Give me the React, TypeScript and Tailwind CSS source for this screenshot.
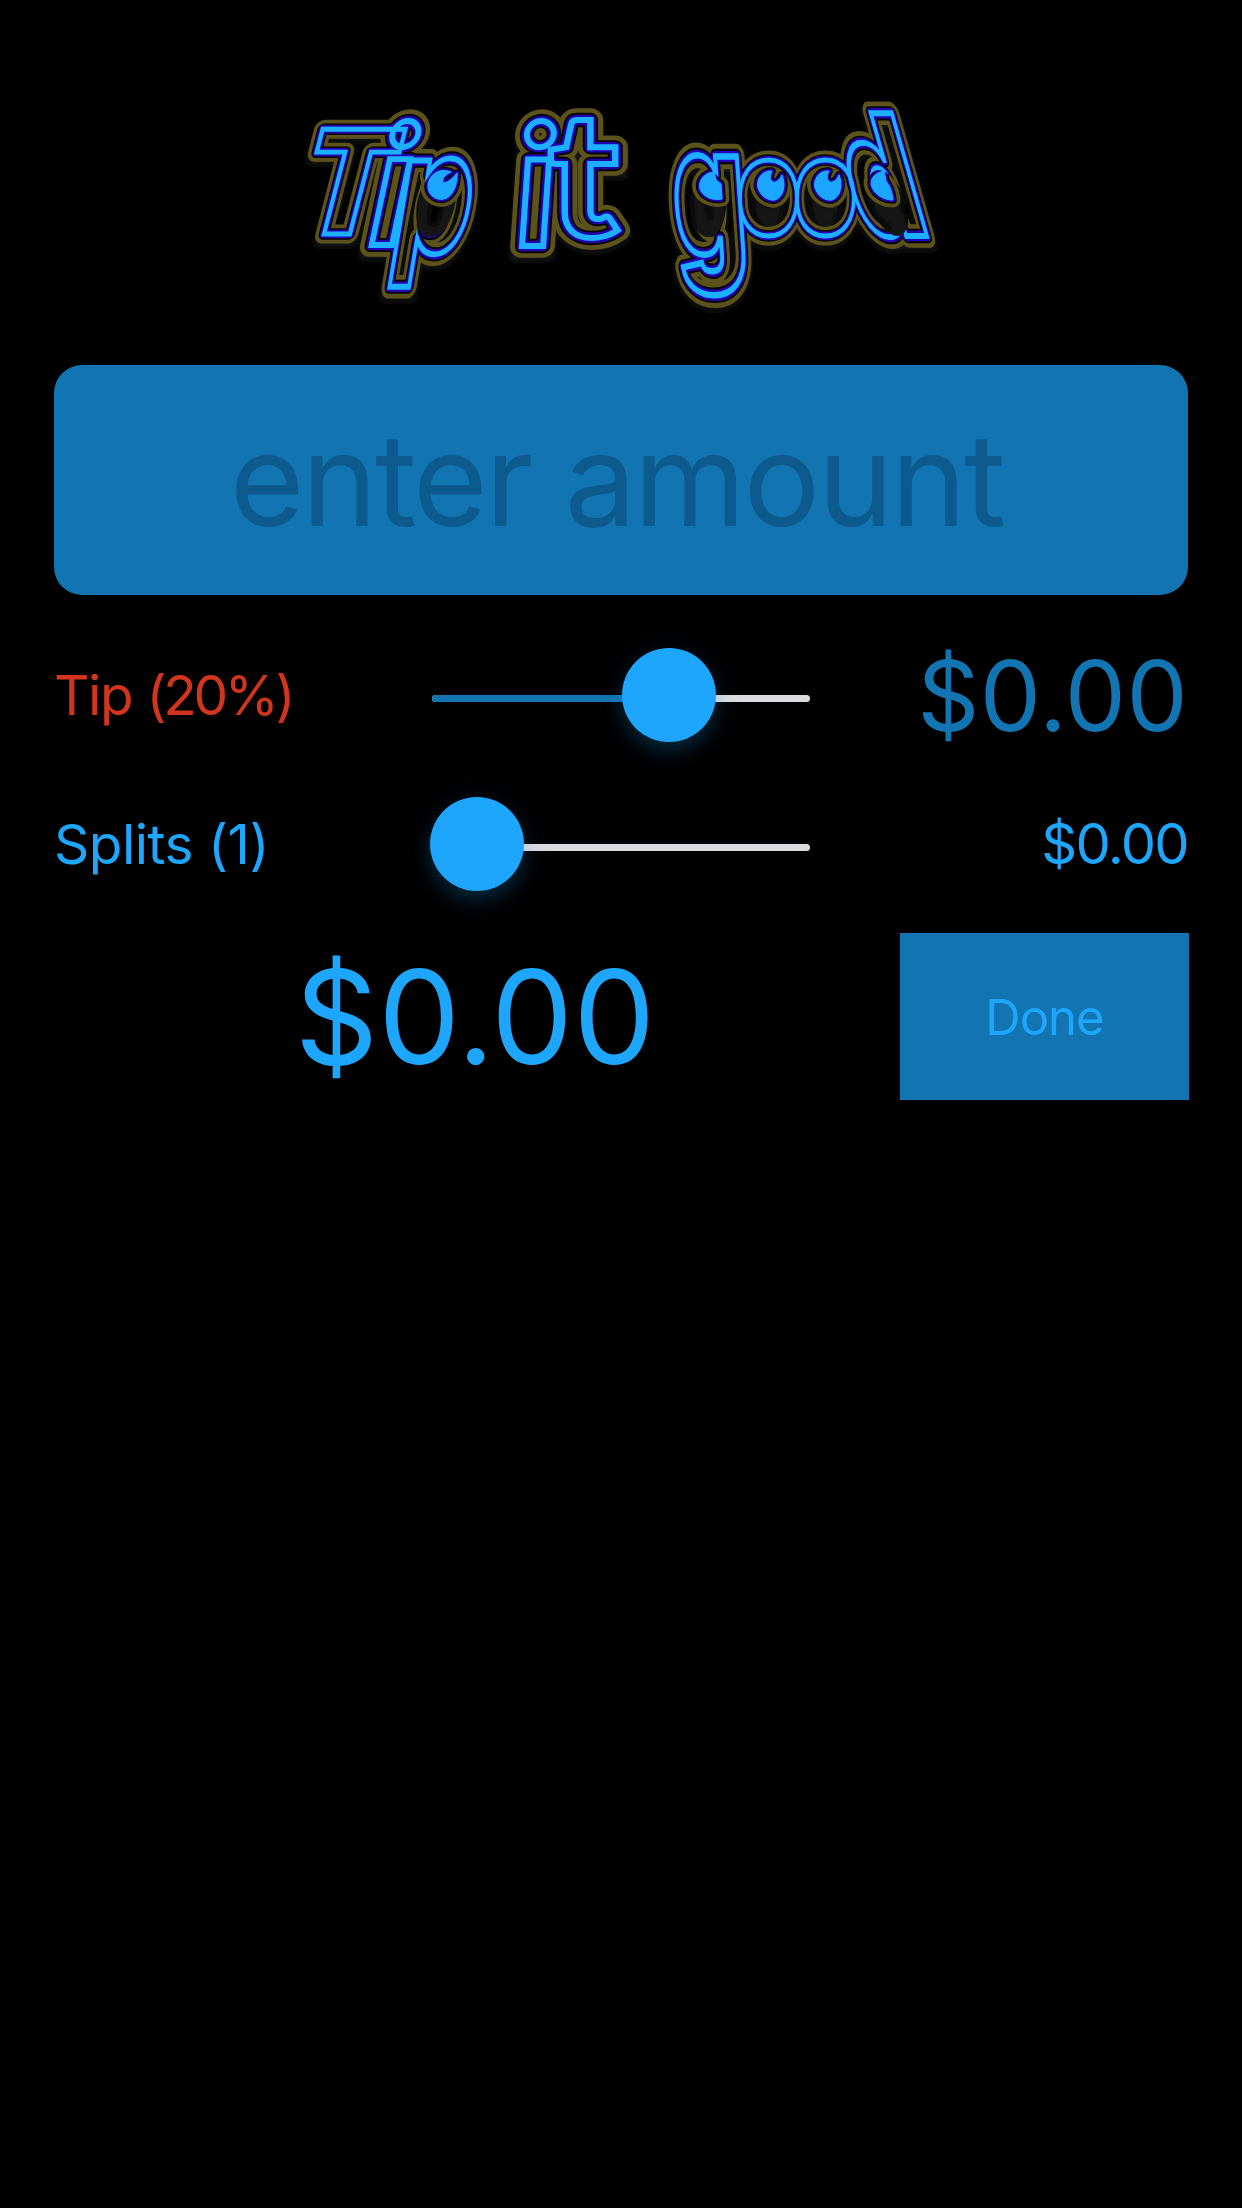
import React from "react";

type Letter = {
  ch: string;
  x: number;
  y: number;
  size: number;
  weight: number;
  skew: number;
  sx: number;
  sy: number;
  font: string;
};

const INTER = "Inter, sans-serif";
const LATO = "Lato, sans-serif";
const DEJAVU = "'DejaVu Sans', sans-serif";

const letters: Letter[] = [
  { ch: "T", x: 292, y: 234, size: 144, weight: 900, skew: -14.5, sx: 0.91, sy: 1, font: INTER },
  { ch: "i", x: 361, y: 245, size: 136, weight: 700, skew: -12, sx: 1.2, sy: 1.23, font: LATO },
  { ch: "p", x: 386, y: 252, size: 136, weight: 700, skew: -9.5, sx: 0.82, sy: 1.23, font: DEJAVU },
  { ch: "i", x: 511, y: 246, size: 136, weight: 700, skew: -4, sx: 1.25, sy: 1.24, font: LATO },
  { ch: "t", x: 548, y: 237, size: 140, weight: 900, skew: 0, sx: 1.33, sy: 1.24, font: LATO },
  { ch: "g", x: 677, y: 256, size: 136, weight: 900, skew: 4, sx: 0.82, sy: 1.34, font: INTER },
  { ch: "o", x: 737, y: 235, size: 136, weight: 900, skew: 0, sx: 0.74, sy: 1, font: INTER },
  { ch: "o", x: 794, y: 235, size: 136, weight: 900, skew: 0, sx: 0.74, sy: 1, font: INTER },
  { ch: "d", x: 863, y: 236, size: 136, weight: 900, skew: 16, sx: 0.79, sy: 1.24, font: INTER },
];

const pupils = [
  "M451 172 C438 167 428 176 428 186 C428 197 439 202 447 198 C454 194 458 182 457 173 C454 177 449 182 444 183 C441 180 444 175 451 172 Z",
  "M714 172 C703 173 698 182 700 189 C703 197 713 201 722 199 L721 184 L716 180 Z",
  "M772 171 C761 170 756 181 758 188 C761 197 769 201 775 200 C784 197 786 184 782 175 C780 179 777 183 773 182 C769 180 770 175 772 171 Z",
  "M829 171 C818 170 813 181 815 188 C818 197 826 201 832 200 C841 197 843 184 839 175 C837 179 834 183 830 182 C826 180 827 175 829 171 Z",
  "M884 171 C874 173 869 180 872 187 C875 195 884 200 893 200 C892 191 890 186 886 181 Z",
];

const layers = [
  { width: 19, color: "#5b521f", join: "round" as const, pupil: 15 },
  { width: 11.5, color: "#050500", join: "round" as const, pupil: 7.5 },
  { width: 8.5, color: "#2400b4", join: "round" as const, pupil: 4.5 },
  { width: 4.8, color: "#1ab0ff", join: "miter" as const, pupil: 1 },
];

function Logo() {
  return (
    <svg viewBox="290 80 670 240" className="h-[240px] w-[670px]" role="img" aria-label="Tip it good">
      <defs>
        <g id="word">
          {letters.map((l, i) => (
            <text
              key={i}
              fontFamily={l.font}
              fontWeight={l.weight}
              fontSize={l.size}
              transform={`translate(${l.x} ${l.y}) skewX(${l.skew}) scale(${l.sx} ${l.sy})`}
            >
              {l.ch}
            </text>
          ))}
        </g>
        <g id="pupils">
          {pupils.map((d) => (
            <path key={d} d={d} />
          ))}
        </g>
        <mask id="eyes" maskUnits="userSpaceOnUse" x="290" y="80" width="670" height="240">
          <rect x="290" y="80" width="670" height="240" fill="#fff" />
          <ellipse cx="767" cy="198" rx="17.5" ry="29" />
          <ellipse cx="825" cy="198" rx="17.5" ry="29" />
          <ellipse cx="708" cy="204" rx="18" ry="33" />
          <ellipse rx="18" ry="33" transform="translate(888 203) skewX(16)" />
          <ellipse rx="19" ry="33" transform="translate(436 204) skewX(-9.5)" />
        </mask>
        <filter id="soft" x="-5%" y="-5%" width="110%" height="115%">
          <feGaussianBlur stdDeviation="0.6" />
        </filter>
        <filter id="glow" x="-5%" y="-5%" width="110%" height="120%">
          <feGaussianBlur stdDeviation="3" />
        </filter>
      </defs>
      <use href="#word" y="4" fill="none" stroke="#121212" strokeWidth="18" filter="url(#glow)" />
      <g filter="url(#soft)">
        {layers.map((l) => (
          <g key={l.width} fill="none" stroke={l.color} strokeLinejoin={l.join}>
            <g mask="url(#eyes)" strokeWidth={l.width}>
              <use href="#word" />
            </g>
            <use href="#pupils" strokeWidth={l.pupil} fill="#1aa6ff" />
          </g>
        ))}
      </g>
    </svg>
  );
}

function Slider({ value, filled }: { value: string; filled: string }) {
  return (
    <div className="relative flex h-[94px] w-[380px] items-center">
      <div className="mt-[7px] ml-[2px] h-[7px] w-[378px] overflow-hidden rounded-full bg-[#dcdcde]">
        <div className={`h-full bg-[#1274b0] ${filled}`} />
      </div>
      <div
        className={`absolute top-0 size-[94px] rounded-full bg-[#1da6fc] shadow-[0_9px_20px_rgba(29,166,252,0.22),0_3px_40px_rgba(29,166,252,0.06)] ${value}`}
      />
    </div>
  );
}

export default function App() {
  return (
    <main className="flex h-[2208px] w-[1242px] flex-col bg-black font-['Inter',sans-serif] text-[#1da6fc]">
      <header className="flex h-[365px] items-start pt-20 pl-[290px]">
        <Logo />
      </header>
      <div className="mx-[54px] flex h-[230px] items-center justify-center rounded-[28px] bg-[#1274b0] pr-[9px] text-[128px] leading-none tracking-[-2.5px] whitespace-nowrap text-[#0d5a8e]">
        enter amount
      </div>
      <section className="flex h-[200px] items-center pr-[54px] pl-[54px]">
        <span className="w-[376px] text-[55px] leading-none tracking-[-1.4px] text-[#d2351d]">
          Tip <span className="tracking-[-3.3px]">(20%)</span>
        </span>
        <Slider value="left-[192px]" filled="w-[240px]" />
        <span className="ml-auto text-[97px] leading-none tracking-[0.4px] text-[#1274b0]">$0.00</span>
      </section>
      <section className="flex h-[98px] items-center pr-[54px] pl-[54px]">
        <span className="w-[376px] text-[55px] leading-none tracking-[-0.5px]">Splits (1)</span>
        <Slider value="left-0" filled="w-5" />
        <span className="ml-auto text-[56px] leading-none tracking-[-1.7px]">$0.00</span>
      </section>
      <section className="mt-10 flex h-[167px] items-center pr-[53px] pl-[54px]">
        <span className="flex-1 pl-[42px] text-center text-[130px] leading-none">$0.00</span>
        <button className="ml-[46px] h-full w-[289px] bg-[#1274b0] pt-[2px] text-[49px] leading-none tracking-[-1px]">
          Done
        </button>
      </section>
    </main>
  );
}
